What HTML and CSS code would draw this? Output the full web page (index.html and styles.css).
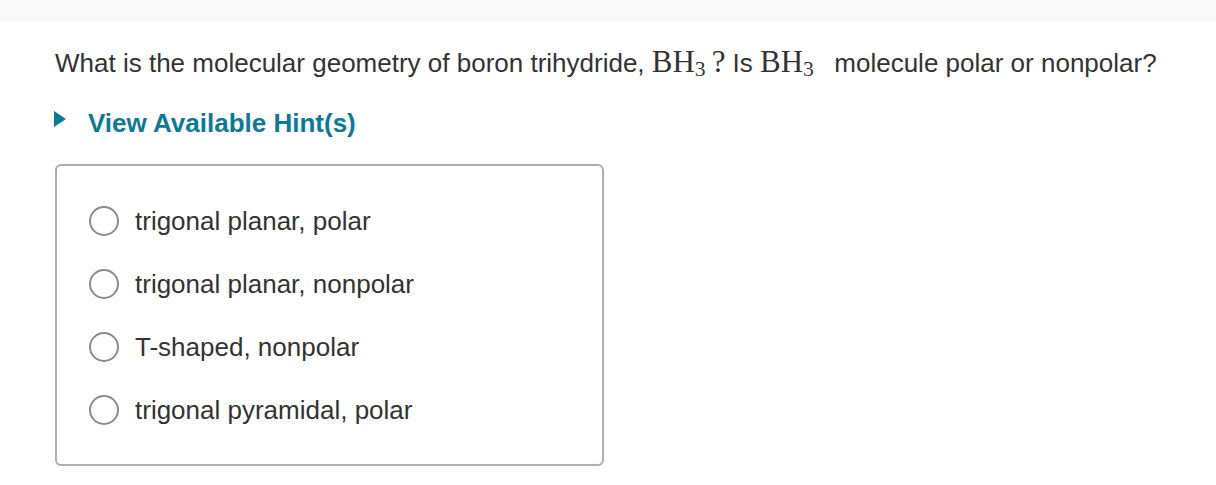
FILE: index.html
```html
<!DOCTYPE html>
<html>
<head>
<meta charset="utf-8">
<link rel="stylesheet" href="styles.css">
</head>
<body>
<div class="topbar"></div>
<main class="content">
  <p class="question">What is the molecular geometry of boron trihydride, <span class="math">BH<sub>3</sub>?</span> Is <span class="math">BH<sub>3</sub></span> &nbsp;molecule polar or nonpolar?</p>
  <div class="hint"><span class="tri"></span><span class="hint-text">View Available Hint(s)</span></div>
  <div class="choices">
    <label class="choice"><span class="radio"></span><span class="label">trigonal planar, polar</span></label>
    <label class="choice"><span class="radio"></span><span class="label">trigonal planar, nonpolar</span></label>
    <label class="choice"><span class="radio"></span><span class="label">T-shaped, nonpolar</span></label>
    <label class="choice"><span class="radio"></span><span class="label">trigonal pyramidal, polar</span></label>
  </div>
</main>
</body>
</html>
```

FILE: styles.css
```css
html, body {
  margin: 0;
  padding: 0;
  background: #ffffff;
}
body {
  font-family: "Liberation Sans", Arial, sans-serif;
  color: #333333;
  font-size: 26px;
}
.topbar {
  height: 22px;
  background: #f8f8f8;
}
.content {
  padding-left: 55px;
}
.question {
  margin: 25px 0 0 0;
  line-height: 30px;
  white-space: nowrap;
}
.math {
  font-family: "Liberation Serif", "Times New Roman", serif;
  font-size: 1.19em;
  line-height: 1;
}
.math sub {
  font-size: 0.7em;
  vertical-align: -0.2em;
  line-height: 0;
  margin-right: 6px;
}
.hint {
  margin-top: 30px;
  height: 30px;
  display: flex;
  align-items: center;
}
.tri {
  width: 0;
  height: 0;
  border-top: 8px solid transparent;
  border-bottom: 8px solid transparent;
  border-left: 12px solid #0b7a99;
  margin-left: -1px;
  margin-top: -9px;
  margin-right: 22px;
}
.hint-text {
  font-weight: bold;
  color: #0b7a99;
  line-height: 30px;
}
.choices {
  margin-top: 26px;
  border: 2px solid #aeaeae;
  border-radius: 6px;
  display: flex;
  flex-direction: column;
  padding-top: 23px;
  box-sizing: border-box;
  height: 302px;
  width: 549px;
}
.choice {
  height: 63px;
  display: flex;
  align-items: center;
  padding-left: 32px;
}
.radio {
  width: 30px;
  height: 30px;
  box-sizing: border-box;
  border: 2.5px solid #8c8c8c;
  border-radius: 50%;
  margin-right: 16px;
  flex: none;
}
.label {
  line-height: 30px;
  color: #333333;
}
```
